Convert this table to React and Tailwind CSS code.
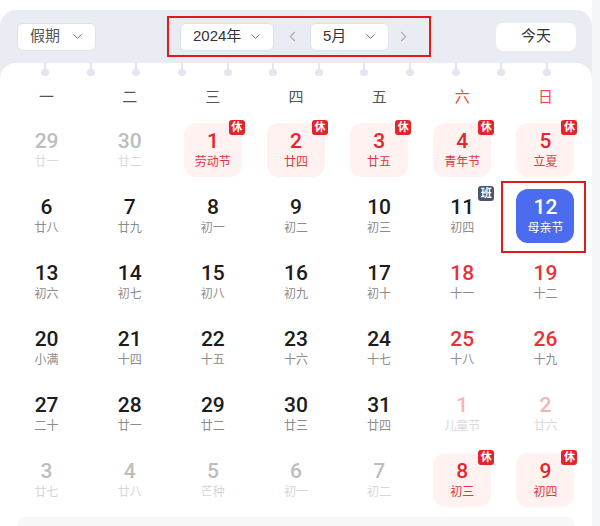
import React from 'react';
import { ChevronDown, ChevronLeft, ChevronRight } from 'lucide-react';

const weekdays = ['一', '二', '三', '四', '五', '六', '日'];

// kind: prev / next / hol / red / sel / normal
const weeks = [
  [
    { d: 29, l: '廿一', k: 'prev' },
    { d: 30, l: '廿二', k: 'prev' },
    { d: 1, l: '劳动节', k: 'hol' },
    { d: 2, l: '廿四', k: 'hol' },
    { d: 3, l: '廿五', k: 'hol' },
    { d: 4, l: '青年节', k: 'hol' },
    { d: 5, l: '立夏', k: 'hol' },
  ],
  [
    { d: 6, l: '廿八' },
    { d: 7, l: '廿九' },
    { d: 8, l: '初一' },
    { d: 9, l: '初二' },
    { d: 10, l: '初三' },
    { d: 11, l: '初四', work: true },
    { d: 12, l: '母亲节', k: 'sel' },
  ],
  [
    { d: 13, l: '初六' },
    { d: 14, l: '初七' },
    { d: 15, l: '初八' },
    { d: 16, l: '初九' },
    { d: 17, l: '初十' },
    { d: 18, l: '十一', k: 'red' },
    { d: 19, l: '十二', k: 'red' },
  ],
  [
    { d: 20, l: '小满' },
    { d: 21, l: '十四' },
    { d: 22, l: '十五' },
    { d: 23, l: '十六' },
    { d: 24, l: '十七' },
    { d: 25, l: '十八', k: 'red' },
    { d: 26, l: '十九', k: 'red' },
  ],
  [
    { d: 27, l: '二十' },
    { d: 28, l: '廿一' },
    { d: 29, l: '廿二' },
    { d: 30, l: '廿三' },
    { d: 31, l: '廿四' },
    { d: 1, l: '儿童节', k: 'nextRed' },
    { d: 2, l: '廿六', k: 'nextRed' },
  ],
  [
    { d: 3, l: '廿七', k: 'next' },
    { d: 4, l: '廿八', k: 'next' },
    { d: 5, l: '芒种', k: 'next' },
    { d: 6, l: '初一', k: 'next' },
    { d: 7, l: '初二', k: 'next' },
    { d: 8, l: '初三', k: 'hol' },
    { d: 9, l: '初四', k: 'hol' },
  ],
];

const styles = {
  normal: { box: '', num: 'text-[#1c1c1c]', lunar: 'text-[#8c8c8c]' },
  prev: { box: '', num: 'text-[#bdbdbd]', lunar: 'text-[#dadada]' },
  next: { box: '', num: 'text-[#bdbdbd]', lunar: 'text-[#d6d6d6]' },
  nextRed: { box: '', num: 'text-[#f5b3b3]', lunar: 'text-[#d9d9d9]' },
  red: { box: '', num: 'text-[#e8323a]', lunar: 'text-[#8c8c8c]' },
  hol: { box: 'bg-[#fff2f1]', num: 'text-[#e5252c]', lunar: 'text-[#e5353b]' },
  sel: { box: 'bg-[#4c6cef]', num: 'text-white', lunar: 'text-white' },
};

const Badge = ({ text, dark }) => (
  <span
    className={`absolute -top-[3px] -right-[3px] w-[16px] h-[15px] rounded-[3px] flex items-center justify-center text-[11px] leading-none font-bold text-white ${
      dark ? 'bg-[#4b5470]' : 'bg-[#e3242b]'
    }`}
  >
    {text}
  </span>
);

const DayCell = ({ day }) => {
  const s = styles[day.k || 'normal'];
  return (
    <div className="h-[66px] flex items-center justify-center">
      <div className="relative">
        {day.k === 'sel' && (
          <div className="absolute -left-[15px] -top-[8px] -right-[12px] -bottom-[10px] border-2 border-[#e11b1b]" />
        )}
        <div className={`relative w-[58px] h-[54px] rounded-[12px] flex flex-col items-center pt-[6px] ${s.box}`}>
          <span className={`text-[21px] leading-[24px] font-medium ${s.num}`} style={{ fontFamily: 'Roboto, sans-serif' }}>
            {day.d}
          </span>
          <span className={`mt-[1px] text-[12px] leading-[16px] ${s.lunar}`}>{day.l}</span>
          {day.k === 'hol' && <Badge text="休" />}
          {day.work && <Badge text="班" dark />}
        </div>
      </div>
    </div>
  );
};

const Select = ({ label, width }) => (
  <div
    className={`${width} h-[28px] bg-white rounded-[6px] border border-[#dfe2ea] flex items-center justify-between pl-[12px] pr-[10px]`}
  >
    <span className="text-[15px] text-[#333]">{label}</span>
    <ChevronDown size={15} strokeWidth={1.5} className="text-[#666]" />
  </div>
);

export default function App() {
  return (
    <div
      className="h-[526px] overflow-hidden flex bg-white"
      style={{ fontFamily: '"Liberation Sans", "Noto Sans CJK SC", sans-serif' }}
    >
      <div className="w-[592px] pt-[10px] flex flex-col">
        <div className="flex-1 bg-[#e9ecf3] rounded-t-[16px] flex flex-col">
          {/* header */}
          <div className="h-[53px] flex items-center pl-[17px] pr-[16px]">
            <div className="w-[79px] h-[28px] bg-white rounded-[6px] border border-[#dfe2ea] flex items-center justify-between pl-[12px] pr-[10px]">
              <span className="text-[15px] text-[#555]">假期</span>
              <ChevronDown size={15} strokeWidth={1.5} className="text-[#666]" />
            </div>
            <div className="ml-[71px] h-[41px] border-2 border-[#e11b1b] flex items-center pl-[11px] pr-[12px]">
              <Select label="2024年" width="w-[94px]" />
              <div className="w-[36px] flex justify-center">
                <ChevronLeft size={17} strokeWidth={1.5} className="text-[#a9adb6]" />
              </div>
              <Select label="5月" width="w-[79px]" />
              <div className="w-[28px] flex justify-center">
                <ChevronRight size={17} strokeWidth={1.5} className="text-[#a9adb6]" />
              </div>
            </div>
            <button className="ml-auto w-[80px] h-[28px] bg-white rounded-[7px] text-[15px] text-[#333]">今天</button>
          </div>

          {/* calendar card */}
          <div className="flex-1 bg-white rounded-t-[16px] flex flex-col">
            <div className="h-[14px] flex justify-between px-[41px]">
              {Array.from({ length: 12 }).map((_, i) => (
                <div key={i} className="w-[8px] flex flex-col items-center">
                  <div className="w-[2px] h-[7px] bg-[#e3e6ee]" />
                  <div className="w-[8px] h-[7px] rounded-b-full rounded-t-full bg-[#e3e6ee] -mt-[1px]" />
                </div>
              ))}
            </div>
            <div className="px-[5px]">
              <div className="grid grid-cols-7 h-[40px] items-center">
                {weekdays.map((w, i) => (
                  <div key={w} className={`text-center text-[15px] ${i >= 5 ? 'text-[#ef4b4b]' : 'text-[#555]'}`}>
                    {w}
                  </div>
                ))}
              </div>
              <div className="grid grid-cols-7">
                {weeks.flat().map((day, i) => (
                  <DayCell key={i} day={day} />
                ))}
              </div>
            </div>
            <div className="flex-1 mt-[4px] mx-[17px] bg-[#f6f7f9] rounded-t-[14px]" />
          </div>
        </div>
      </div>
      <div className="flex-1 bg-[#f5f6f8]" />
    </div>
  );
}
